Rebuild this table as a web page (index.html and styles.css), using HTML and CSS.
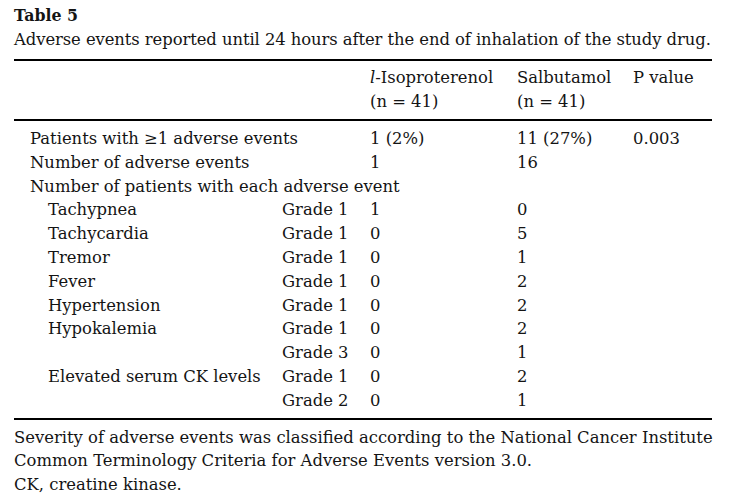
FILE: index.html
```html
<!DOCTYPE html>
<html>
<head>
<meta charset="utf-8">
<link rel="stylesheet" href="styles.css">
</head>
<body>
<div class="page">
  <div class="title">Table 5</div>
  <div class="caption">Adverse events reported until 24 hours after the end of inhalation of the study drug.</div>
  <table class="tbl">
    <colgroup>
      <col class="c-label">
      <col class="c-grade">
      <col class="c-iso">
      <col class="c-sal">
      <col class="c-p">
    </colgroup>
    <thead>
      <tr>
        <th></th>
        <th></th>
        <th><i>l</i>-Isoproterenol<br>(n = 41)</th>
        <th>Salbutamol<br>(n = 41)</th>
        <th>P value</th>
      </tr>
    </thead>
    <tbody>
      <tr class="first"><td class="lab" colspan="2">Patients with ≥1 adverse events</td><td>1 (2%)</td><td>11 (27%)</td><td>0.003</td></tr>
      <tr><td class="lab" colspan="2">Number of adverse events</td><td>1</td><td>16</td><td></td></tr>
      <tr><td class="lab" colspan="3">Number of patients with each adverse event</td><td></td><td></td></tr>
      <tr><td class="sub">Tachypnea</td><td>Grade 1</td><td>1</td><td>0</td><td></td></tr>
      <tr><td class="sub">Tachycardia</td><td>Grade 1</td><td>0</td><td>5</td><td></td></tr>
      <tr><td class="sub">Tremor</td><td>Grade 1</td><td>0</td><td>1</td><td></td></tr>
      <tr><td class="sub">Fever</td><td>Grade 1</td><td>0</td><td>2</td><td></td></tr>
      <tr><td class="sub">Hypertension</td><td>Grade 1</td><td>0</td><td>2</td><td></td></tr>
      <tr><td class="sub">Hypokalemia</td><td>Grade 1</td><td>0</td><td>2</td><td></td></tr>
      <tr><td class="sub"></td><td>Grade 3</td><td>0</td><td>1</td><td></td></tr>
      <tr><td class="sub">Elevated serum CK levels</td><td>Grade 1</td><td>0</td><td>2</td><td></td></tr>
      <tr class="last"><td class="sub"></td><td>Grade 2</td><td>0</td><td>1</td><td></td></tr>
    </tbody>
  </table>
  <div class="notes">
    <p>Severity of adverse events was classified according to the National Cancer Institute<br>Common Terminology Criteria for Adverse Events version 3.0.</p>
    <p>CK, creatine kinase.</p>
  </div>
</div>
</body>
</html>
```
FILE: styles.css
```css
html, body {
  margin: 0;
  padding: 0;
  background: #ffffff;
}
body {
  font-family: "DejaVu Serif", "Liberation Serif", serif;
  font-size: 16.4px;
  color: #141414;
}
.page {
  width: 698px;
  padding: 6px 0 0 14px;
}
.title {
  font-weight: bold;
  font-size: 15.8px;
  line-height: 20px;
}
.caption {
  line-height: 24px;
  margin-top: 2px;
  white-space: nowrap;
  letter-spacing: -0.07px;
}
.tbl {
  width: 698px;
  border-collapse: collapse;
  table-layout: fixed;
  margin-top: 7px;
}
.c-label { width: 268px; }
.c-grade { width: 88px; }
.c-iso { width: 147px; }
.c-sal { width: 116px; }
.c-p { width: 79px; }
.tbl thead tr {
  border-top: 2px solid #000;
  border-bottom: 2px solid #000;
}
.tbl th {
  font-weight: normal;
  text-align: left;
  vertical-align: top;
  padding: 5px 0 5px 0;
  line-height: 24px;
  white-space: nowrap;
}
.tbl td {
  padding: 0;
  line-height: 23.8px;
  white-space: nowrap;
  vertical-align: top;
}
.tbl tr.first td { padding-top: 6px; }
.tbl tr.last td { padding-bottom: 5px; }
.tbl tbody tr.last { border-bottom: 2px solid #000; }
.tbl td.lab { padding-left: 16px; }
.tbl td.sub { padding-left: 34px; }
.notes {
  padding-top: 6px;
}
.notes p {
  margin: 0;
  line-height: 23.7px;
  white-space: nowrap;
}
```
